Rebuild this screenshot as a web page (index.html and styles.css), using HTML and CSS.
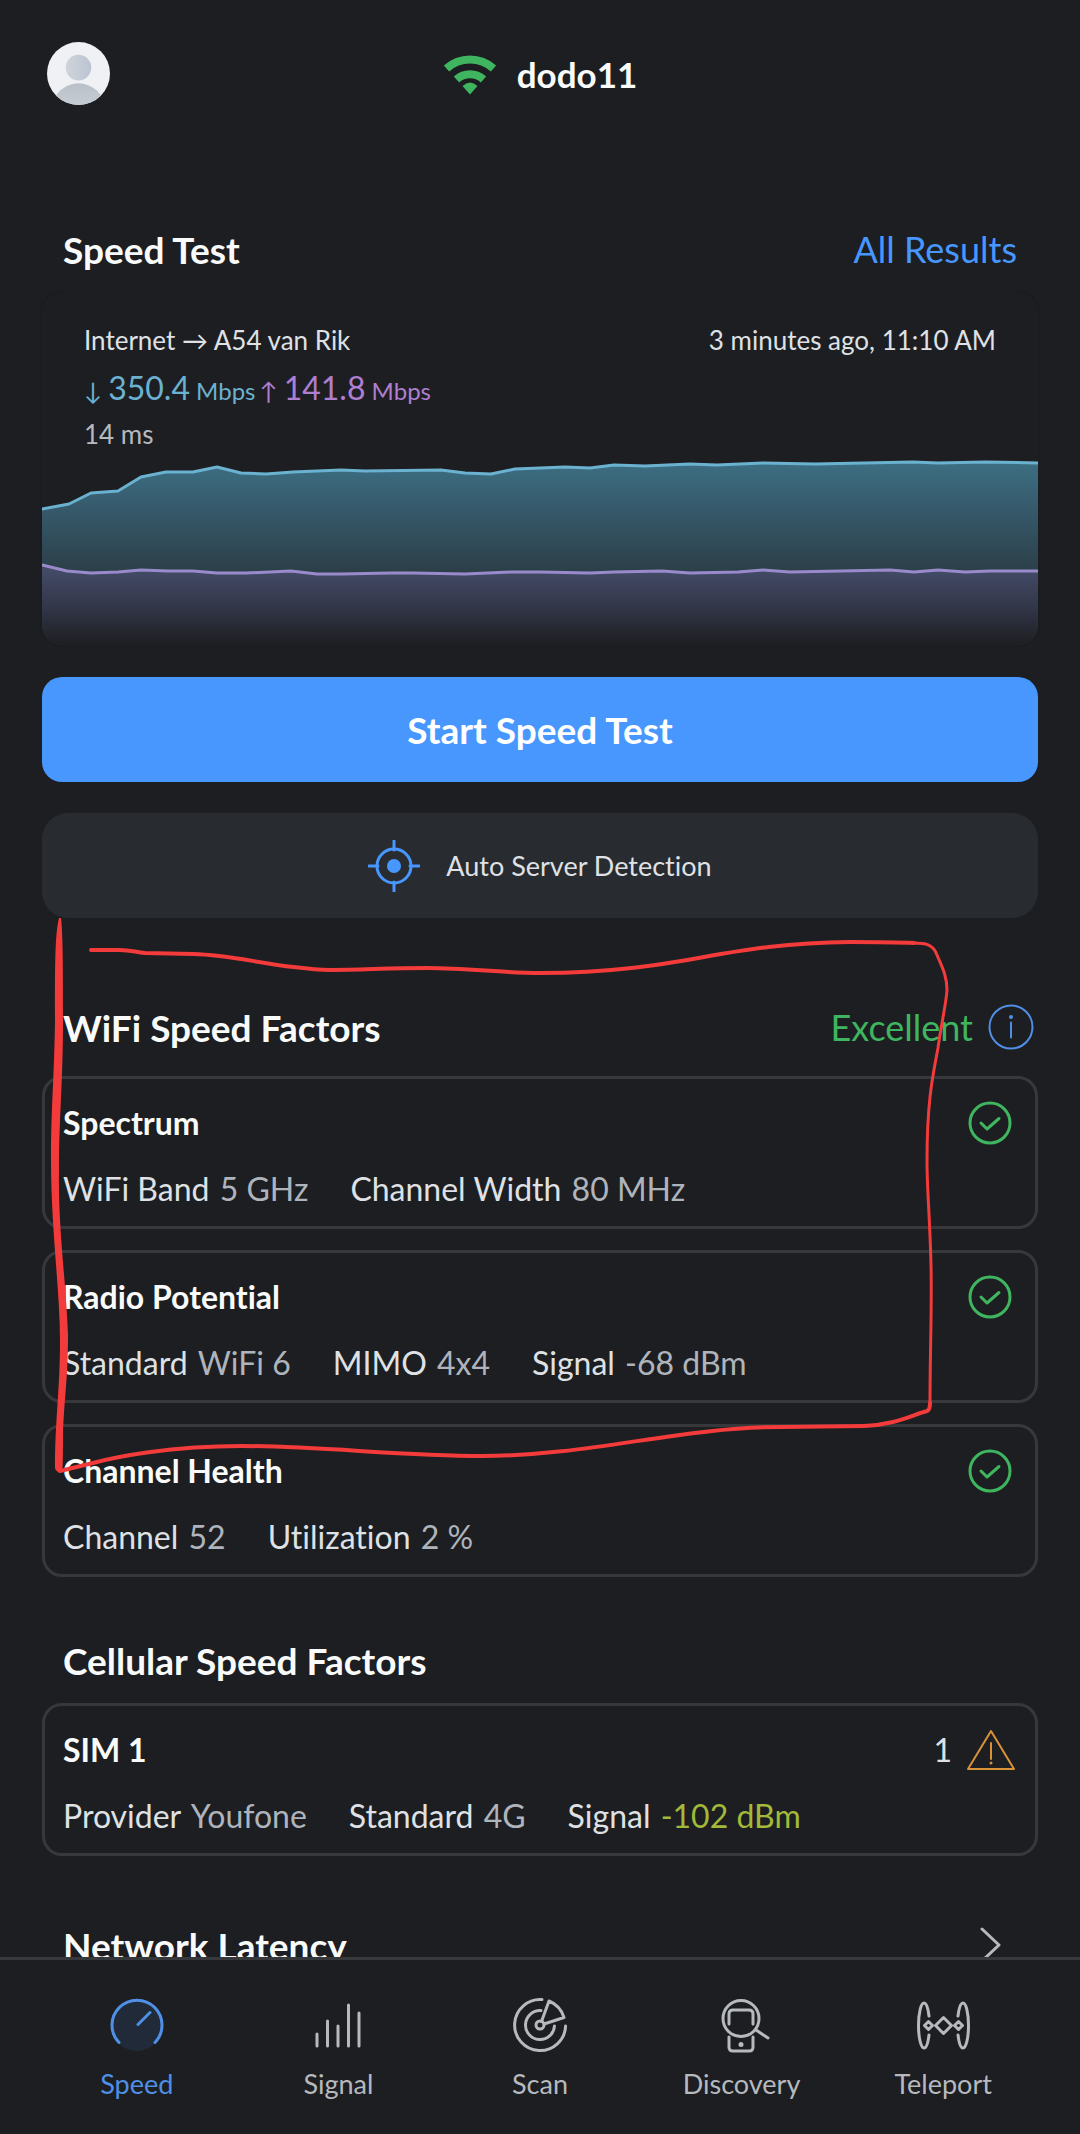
FILE: index.html
```html
<!DOCTYPE html>
<html lang="en">
<head>
	<meta charset="utf-8">
	<meta name="viewport" content="width=device-width, initial-scale=1">
	<title>dodo11</title>
	<link rel="stylesheet" href="styles.css">
</head>
<body>
<svg class="defs" width="0" height="0">
	<symbol id="check" viewBox="0 0 44 44">
		<circle cx="22" cy="22" r="20"/>
		<path d="M13 22l6 6 12-10.500"/>
	</symbol>
</svg>
<main class="main">
	<header class="top">
		<button class="avatar" aria-label="Account">
			<svg viewBox="0 0 64 64">
				<defs>
					<linearGradient id="head" x1="0" y1="0" x2="1" y2="0">
						<stop offset="0" stop-color="#cfd4da"/>
						<stop offset="1" stop-color="#bcc4d2"/>
					</linearGradient>
					<linearGradient id="bust" x1="0" y1="0" x2="0" y2="1">
						<stop offset="0" stop-color="#b9c0c8"/>
						<stop offset="1" stop-color="#d5dadf"/>
					</linearGradient>
					<clipPath id="round"><circle cx="32" cy="32" r="32"/></clipPath>
				</defs>
				<g clip-path="url(#round)">
					<rect width="64" height="64" fill="#f0f1f4"/>
					<circle cx="32" cy="26" r="13" fill="url(#head)"/>
					<ellipse cx="32" cy="66" rx="26" ry="24" fill="url(#bust)"/>
				</g>
			</svg>
		</button>
		<h1 class="ssid">
			<svg class="wifi" viewBox="0 0 54 42">
				<path d="M3.500 15.500a35 35 0 0 1 47 0M13.500 26.500a20 20 0 0 1 27 0" fill="none" stroke="#3fb55f" stroke-width="8"/>
				<path d="M19.500 33q7.500-7 15 0l-7.500 8.500z" fill="#3fb55f"/>
			</svg>
			dodo11
		</h1>
	</header>

	<section class="speed">
		<div class="head">
			<h2>Speed Test</h2>
			<a class="link" href="#results">All Results</a>
		</div>
		<div class="result">
			<div class="r-text">
				<p class="r-row"><span>Internet → A54 van Rik</span><span>3 minutes ago, 11:10 AM</span></p>
				<p class="r-rate">
					<span class="down">↓ <b>350.4</b> Mbps</span>
					<span class="up">↑ <b>141.8</b> Mbps</span>
				</p>
				<p class="r-ping">14 ms</p>
			</div>
			<svg class="chart" viewBox="42 458 996 187" preserveAspectRatio="none">
				<defs>
					<linearGradient id="gdown" gradientUnits="userSpaceOnUse" x1="0" y1="463" x2="0" y2="571">
						<stop offset="0" stop-color="#3c6e82"/>
						<stop offset=".5" stop-color="#355667"/>
						<stop offset="1" stop-color="#2c3f48"/>
					</linearGradient>
					<linearGradient id="gup" gradientUnits="userSpaceOnUse" x1="0" y1="571" x2="0" y2="645">
						<stop offset="0" stop-color="#434a66"/>
						<stop offset=".5" stop-color="#323648"/>
						<stop offset="1" stop-color="#1d1e21"/>
					</linearGradient>
				</defs>
				<path fill="url(#gdown)" d="M42 509L69 504 91 493 118 491 141 477 166 472 193 472 217 467 241 473 266 474 293 472 341 470 365 471 441 470 465 473 491 474 515 469 565 467 590 468 614 465 645 466 690 464 717 465 763 463 815 464 913 462 938 463 985 462 1038 463V645H42z"/>
				<path fill="url(#gup)" d="M42 565L67 571 91 573 118 572 141 570 168 571 193 571 217 573 246 573 291 571 317 574 341 574 391 573 413 573 465 574 511 572 540 572 590 573 614 572 662 571 690 573 738 572 763 570 790 572 890 570 914 572 938 570 965 572 990 571 1038 571V645H42z"/>
				<path class="line" stroke="#6bb2d0" d="M42 509L69 504 91 493 118 491 141 477 166 472 193 472 217 467 241 473 266 474 293 472 341 470 365 471 441 470 465 473 491 474 515 469 565 467 590 468 614 465 645 466 690 464 717 465 763 463 815 464 913 462 938 463 985 462 1038 463"/>
				<path class="line" stroke="#988acb" d="M42 565L67 571 91 573 118 572 141 570 168 571 193 571 217 573 246 573 291 571 317 574 341 574 391 573 413 573 465 574 511 572 540 572 590 573 614 572 662 571 690 573 738 572 763 570 790 572 890 570 914 572 938 570 965 572 990 571 1038 571"/>
			</svg>
		</div>
		<button class="btn start">Start Speed Test</button>
		<button class="btn server">
			<svg class="target" viewBox="0 0 52 52">
				<circle cx="26" cy="26" r="17"/>
				<path d="M26 1v9M26 42v9M1 26h9M42 26h9"/>
				<circle class="dot" cx="26" cy="26" r="7"/>
			</svg>
			Auto Server Detection
		</button>
	</section>

	<section class="wifi-factors">
		<div class="head tall">
			<h2>WiFi Speed Factors</h2>
			<button class="grade">
				Excellent
				<svg class="info" viewBox="0 0 46 46">
					<circle cx="23" cy="23" r="21.500"/>
					<path d="M23 18.500v15"/>
					<circle class="dot" cx="23" cy="13" r="2"/>
				</svg>
			</button>
		</div>
		<div class="cards">
			<div class="card">
				<div class="c-head"><h3>Spectrum</h3><svg class="check"><use href="#check"/></svg></div>
				<div class="c-row">
					<span>WiFi Band <i>5 GHz</i></span>
					<span>Channel Width <i>80 MHz</i></span>
				</div>
			</div>
			<div class="card">
				<div class="c-head"><h3>Radio Potential</h3><svg class="check"><use href="#check"/></svg></div>
				<div class="c-row">
					<span>Standard <i>WiFi 6</i></span>
					<span>MIMO <i>4x4</i></span>
					<span>Signal <i>-68 dBm</i></span>
				</div>
			</div>
			<div class="card">
				<div class="c-head"><h3>Channel Health</h3><svg class="check"><use href="#check"/></svg></div>
				<div class="c-row">
					<span>Channel <i>52</i></span>
					<span>Utilization <i>2 %</i></span>
				</div>
			</div>
		</div>
		<!-- hand-drawn marker around the wifi block -->
		<svg class="marker" viewBox="0 918 1080 560">
			<path class="thick" d="M59 918C55 935 55 960 55 1022C54 1080 51 1110 51 1160C51 1230 60 1290 60 1341C60 1390 55 1420 55 1468Q56 1473 62 1472Q63 1470 63 1435C64 1400 68 1380 68 1335C66 1280 58 1230 59 1170C59 1120 63 1080 63 1022C63 970 63 935 61 918Q60 916 59 918z"/>
			<path d="M60 1471L93 1463C115 1457 170 1446 241 1446C320 1446 400 1456 482 1456C590 1456 680 1427 781 1427L864 1426C895 1425 912 1415 927 1411Q930 1410 930 1403" stroke-width="4"/>
			<path d="M930 1403C930 1350 932 1310 931 1265C930 1220 927 1190 927 1161C927 1100 933 1075 938 1048C941 1025 946 1005 947 990C947 975 941 965 937 955C933 944 925 943 914 943" stroke-width="3"/>
			<path d="M914 943C890 942 870 942 850 942C720 943 680 973 540 973C500 973 470 968 427 968C390 968 360 970 331 970C270 968 240 955 193 954L145 953C135 952 130 950 120 950H91" stroke-width="4"/>
		</svg>
	</section>

	<section class="cell-factors">
		<div class="head">
			<h2>Cellular Speed Factors</h2>
		</div>
		<div class="card">
			<div class="c-head">
				<h3>SIM 1</h3>
				<span class="count">1
					<svg class="warn" viewBox="0 0 50 44">
						<path d="M25 3L48 41H2z"/>
						<path d="M25 15v16"/>
						<circle class="dot" cx="25" cy="35" r="1.500"/>
					</svg>
				</span>
			</div>
			<div class="c-row">
				<span>Provider <i>Youfone</i></span>
				<span>Standard <i>4G</i></span>
				<span>Signal <i class="fair">-102 dBm</i></span>
			</div>
		</div>
	</section>

	<section class="latency">
		<div class="head tall">
			<h2>Network Latency</h2>
			<svg class="chevron" viewBox="0 0 22 36"><path d="M2 2l17 16L2 34"/></svg>
		</div>
	</section>
</main>

<nav class="tabs">
	<a class="tab on" href="#speed">
		<svg viewBox="0 0 60 60">
			<circle class="disc" cx="30" cy="30" r="26"/>
			<path d="M12 47.500A25 25 0 1 1 48 47.500M31 29.500L43 17.500"/>
		</svg>
		Speed
	</a>
	<a class="tab" href="#signal">
		<svg viewBox="0 0 60 60">
			<path d="M9 39v12M19.500 26v25M30 31v20M40.500 10v41M51 18v33"/>
		</svg>
		Signal
	</a>
	<a class="tab" href="#scan">
		<svg viewBox="0 0 60 60">
			<path d="M32 4.600A25.500 25.500 0 1 0 55.600 31M31 15.600A14.500 14.500 0 1 0 44.500 31M31.500 26.500L39 6A26 26 0 0 1 54 22.500L34 29"/>
			<circle cx="30" cy="30" r="4"/>
		</svg>
		Scan
	</a>
	<a class="tab" href="#discovery">
		<svg viewBox="0 0 60 60">
			<circle cx="29" cy="23.500" r="18"/>
			<path d="M17 29V19q0-4 4-4h16q4 0 4 4v10M17 42v10q0 4 4 4h16q4 0 4-4V42M44 35l12 8"/>
			<circle class="dot" cx="29" cy="49.500" r="2.500"/>
		</svg>
		Discovery
	</a>
	<a class="tab" href="#teleport">
		<svg viewBox="0 0 60 60">
			<path d="M16 21C15 13 13.500 8 11 8C8 8 5.500 18 5.500 30.500S8 53 11 53C13.500 53 15 48 16 40M45 21C46 13 47.500 8 50 8C53 8 55.500 18 55.500 30.500S53 53 50 53C47.500 53 46 48 45 40"/>
			<path d="M30.500 22.500l8 8-8 8-8-8zM15.500 26.500l4 4-4 4-4-4zM45.500 26.500l4 4-4 4-4-4z"/>
		</svg>
		Teleport
	</a>
</nav>
</body>
</html>
```
FILE: styles.css
```css
*{
	box-sizing: border-box;
	margin: 0;
	padding: 0;
}
body{
	display: flex;
	flex-direction: column;
	height: 100vh;
	background-color: #1c1e21;
	color: #dfe1e5;
	font-family: Lato, Inter, "Liberation Sans", sans-serif;
	font-size: 27px;
	font-variant-ligatures: none;
}
button{
	border: 0;
	background: none;
	color: inherit;
	font: inherit;
	cursor: pointer;
}
a{
	text-decoration: none;
}
svg{
	display: block;
	fill: none;
	stroke-linecap: round;
	stroke-linejoin: round;
}
.defs{
	position: absolute;
}
.dot{
	stroke: none;
}
.main{
	flex: 1;
	min-height: 0;
	overflow-y: auto;
	scrollbar-width: none;
	padding: 42px 42px 60px;
}

/* top bar */
.top{
	display: grid;
	grid-template-columns: 1fr auto 1fr;
	align-items: center;
	height: 63px;
	padding: 0 5px;
	margin-bottom: 120px;
}
.avatar{
	width: 63px;
	height: 63px;
}
.ssid{
	display: flex;
	align-items: center;
	gap: 20px;
	color: #f9fafa;
	font-size: 35px;
	line-height: 42px;
}
.wifi{
	width: 54px;
	height: 42px;
	stroke-linecap: butt;
}

/* section heading */
.head{
	display: flex;
	align-items: center;
	justify-content: space-between;
	height: 48px;
	margin-bottom: 19px;
	padding: 0 21px;
	font-size: 36px;
}
.head h2{
	color: #f9fafa;
	font-size: 37px;
}
.tall{
	height: 60px;
}
.link{
	color: #4797ff;
}

/* last result */
.result{
	overflow: hidden;
	margin-bottom: 32px;
	padding-top: 25px;
	border-radius: 20px;
	background-color: #1d1e22;
	box-shadow: 0 0 2px #191a1d;
}
.r-text{
	padding: 0 42px;
	font-size: 26px;
	line-height: 47px;
}
.r-row{
	display: flex;
	justify-content: space-between;
}
.r-rate{
	display: flex;
	gap: 4px;
	height: 47px;
	font-size: 24px;
}
.r-rate b{
	font-size: 32px;
	font-weight: 400;
}
.down{
	color: #6bb2d0;
}
.up{
	color: #ae7fd0;
}
.r-ping{
	color: #b6b9be;
}
.chart{
	width: 100%;
	height: 187px;
}
.line{
	stroke-width: 3;
}
.btn{
	display: flex;
	align-items: center;
	justify-content: center;
	width: 100%;
	height: 105px;
}
.start{
	margin-bottom: 31px;
	border-radius: 20px;
	background-color: #4797ff;
	color: #fff;
	font-size: 37px;
	font-weight: 700;
}
.server{
	gap: 26px;
	border-radius: 26px;
	background-color: #282b2f;
}
.target{
	width: 52px;
	height: 52px;
	stroke: #4797ff;
	stroke-width: 3;
}
.target .dot{
	fill: #4797ff;
}

/* factors */
.wifi-factors{
	position: relative;
	margin-top: 79px;
}
.cell-factors,
.latency{
	margin-top: 59px;
}
.grade{
	display: flex;
	align-items: center;
	gap: 15px;
	margin-right: -17px;
	color: #3fb55f;
	font-size: 36px;
}
.info{
	width: 46px;
	height: 46px;
	stroke: #4f8fe6;
	stroke-width: 2;
}
.info .dot{
	fill: #4f8fe6;
}
.cards{
	display: grid;
	gap: 21px;
}
.card{
	padding: 24px 18px 17px;
	border: 3px solid #36383c;
	border-radius: 20px;
	font-size: 32px;
	line-height: 40px;
}
.c-head{
	display: flex;
	align-items: center;
	justify-content: space-between;
	height: 40px;
	margin-bottom: 26px;
}
.c-head h3{
	color: #f9fafa;
	font-size: 32px;
}
.check{
	width: 44px;
	height: 44px;
	margin-right: 5px;
	stroke: #3fb55f;
	stroke-width: 3;
}
.c-row{
	display: flex;
	gap: 42px;
}
.c-row i{
	margin-left: 2px;
	color: #afb4bc;
	font-style: normal;
}
.c-row .fair{
	color: #a3b93a;
}
.count{
	display: flex;
	align-items: center;
	gap: 14px;
	margin-right: 1px;
}
.warn{
	width: 50px;
	height: 44px;
	stroke: #d8923a;
	stroke-width: 2;
}
.warn .dot{
	fill: #d8923a;
}
.chevron{
	width: 22px;
	height: 36px;
	margin-right: 15px;
	stroke: #b6b9be;
	stroke-width: 3;
}
.marker{
	position: absolute;
	top: -79px;
	left: -42px;
	width: calc(100% + 84px);
	stroke: #f43b3b;
	pointer-events: none;
}
.thick{
	fill: #f43b3b;
	stroke: none;
}

/* bottom tabs */
.tabs{
	display: flex;
	padding: 35px 36px 30px;
	border-top: 3px solid #36383c;
}
.tab{
	display: flex;
	flex: 1;
	flex-direction: column;
	align-items: center;
	gap: 9px;
	color: #b6b9be;
	line-height: 40px;
}
.tab svg{
	width: 60px;
	height: 60px;
	stroke: currentColor;
	stroke-width: 3;
}
.tab .dot{
	fill: currentColor;
}
.tab .disc{
	fill: #212a38;
	stroke: none;
}
.on{
	color: #4f8fe6;
}
```
